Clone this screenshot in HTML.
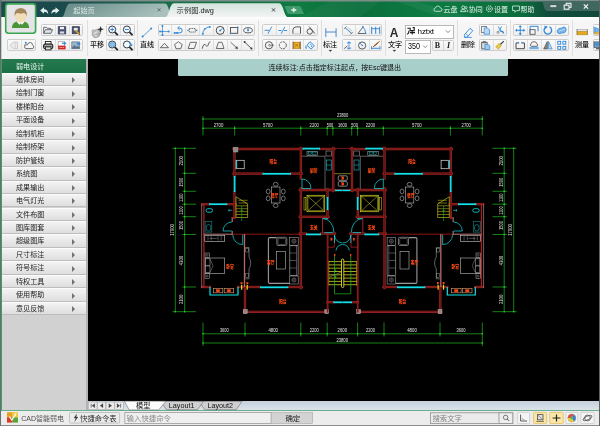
<!DOCTYPE html>
<html lang="zh-CN">
<head>
<meta charset="utf-8">
<title>CAD智能弱电</title>
<style>
html,body{margin:0;padding:0;}
body{width:600px;height:426px;overflow:hidden;background:#000;position:relative;
 font-family:"Liberation Sans","Noto Sans CJK SC",sans-serif;font-size:7.1px;color:#222;font-weight:400;}
.abs{position:absolute;}
.lbl,#left,#banner,.combo,svg{will-change:transform;}
#title{left:0;top:0;width:600px;height:17px;
 background:linear-gradient(90deg,#1b4a4d 0,#1b4a4d 62px,#1c5a4f 120px,#187048 175px,#0f7a42 300px,#0b6e3c 360px,#0d7c44 430px,#0b6c3c 522px,#0f5a3c 538px,#114c3c 548px,#104a3c 600px);}
#ribbon{left:0;top:17.1px;width:600px;height:41.8px;background:linear-gradient(180deg,#fefefe 0,#f6f6f6 12%,#f4f4f4 100%);}
.grp{position:absolute;border:0.7px solid #cdcdcd;border-radius:1.5px;background:linear-gradient(180deg,#fafafa,#eeeeee);box-sizing:border-box;}
.vsep{position:absolute;top:20px;height:36px;width:0.8px;background:#dfdfdf;}
.lbl{position:absolute;font-size:7.1px;font-weight:500;color:#161616;white-space:nowrap;line-height:8px;width:30px;text-align:center;}
.combo{position:absolute;background:#fff;border:0.7px solid #b9b9b9;box-sizing:border-box;font-size:8px;color:#111;white-space:nowrap;}
#left{left:0;top:58.7px;width:87.7px;height:351.3px;background:#d1d1d1;}
#lhead{left:2px;top:0;width:84.3px;height:13.8px;background:linear-gradient(180deg,#24794e,#1b6f45);color:#eaf3ee;font-size:7.1px;line-height:13.5px;}
.mi{position:absolute;left:2px;width:84.3px;height:13.47px;box-sizing:border-box;border-bottom:0.7px solid #bdbdbd;border-top:0.6px solid #fbfbfb;
 background:linear-gradient(180deg,#f3f3f3,#dedede);font-size:7.1px;line-height:12.5px;color:#1d1d1d;}
.mi span{position:absolute;left:14px;top:0;}
.mi i{position:absolute;left:70.3px;top:3.4px;width:0;height:0;border-left:3.6px solid #707070;border-top:3px solid transparent;border-bottom:3px solid transparent;}
#banner{left:177.8px;top:58.6px;width:330px;height:17px;background:#a9cfcb;border-radius:0 0 1.5px 1.5px;font-size:7.05px;line-height:17.4px;color:#0c0c0c;white-space:nowrap;}
#tabs{left:87.7px;top:400.8px;width:512.3px;height:9.4px;background:linear-gradient(180deg,#c5d0dd,#dbe3e9);}
#status{left:0;top:410px;width:600px;height:16px;background:#ececec;border-bottom:1px solid #8c8c8c;box-sizing:border-box;}
.sb{position:absolute;box-sizing:border-box;border:0.7px solid #b4b4b4;font-size:7.6px;white-space:nowrap;}
</style>
</head>
<body>
<div id="title" class="abs"></div>
<div id="ribbon" class="abs"></div>
<div class="grp" style="left:6.7px;top:39.3px;width:29.6px;height:12.1px"></div>
<div class="abs" style="left:21.2px;top:40.3px;width:0.7px;height:10.1px;background:#dedede"></div>
<div class="grp" style="left:41px;top:24.4px;width:42.0px;height:11.9px"></div>
<div class="abs" style="left:54.7px;top:25.4px;width:0.7px;height:9.9px;background:#dedede"></div>
<div class="abs" style="left:68.7px;top:25.4px;width:0.7px;height:9.9px;background:#dedede"></div>
<div class="grp" style="left:41px;top:39.3px;width:42.0px;height:12.1px"></div>
<div class="abs" style="left:54.7px;top:40.3px;width:0.7px;height:10.1px;background:#dedede"></div>
<div class="abs" style="left:68.7px;top:40.3px;width:0.7px;height:10.1px;background:#dedede"></div>
<div class="grp" style="left:106px;top:24.4px;width:29.3px;height:11.9px"></div>
<div class="abs" style="left:120.4px;top:25.4px;width:0.7px;height:9.9px;background:#dedede"></div>
<div class="grp" style="left:106px;top:39.3px;width:29.3px;height:12.1px"></div>
<div class="abs" style="left:120.4px;top:40.3px;width:0.7px;height:10.1px;background:#dedede"></div>
<div class="grp" style="left:157.5px;top:24.4px;width:97.5px;height:11.9px"></div>
<div class="abs" style="left:171.1px;top:25.4px;width:0.7px;height:9.9px;background:#dedede"></div>
<div class="abs" style="left:185.1px;top:25.4px;width:0.7px;height:9.9px;background:#dedede"></div>
<div class="abs" style="left:199.0px;top:25.4px;width:0.7px;height:9.9px;background:#dedede"></div>
<div class="abs" style="left:212.9px;top:25.4px;width:0.7px;height:9.9px;background:#dedede"></div>
<div class="abs" style="left:226.8px;top:25.4px;width:0.7px;height:9.9px;background:#dedede"></div>
<div class="abs" style="left:240.8px;top:25.4px;width:0.7px;height:9.9px;background:#dedede"></div>
<div class="grp" style="left:157.5px;top:39.3px;width:97.5px;height:12.1px"></div>
<div class="abs" style="left:171.1px;top:40.3px;width:0.7px;height:10.1px;background:#dedede"></div>
<div class="abs" style="left:185.1px;top:40.3px;width:0.7px;height:10.1px;background:#dedede"></div>
<div class="abs" style="left:199.0px;top:40.3px;width:0.7px;height:10.1px;background:#dedede"></div>
<div class="abs" style="left:212.9px;top:40.3px;width:0.7px;height:10.1px;background:#dedede"></div>
<div class="abs" style="left:226.8px;top:40.3px;width:0.7px;height:10.1px;background:#dedede"></div>
<div class="abs" style="left:240.8px;top:40.3px;width:0.7px;height:10.1px;background:#dedede"></div>
<div class="grp" style="left:262px;top:24.4px;width:55.5px;height:11.9px"></div>
<div class="abs" style="left:275.6px;top:25.4px;width:0.7px;height:9.9px;background:#dedede"></div>
<div class="abs" style="left:289.4px;top:25.4px;width:0.7px;height:9.9px;background:#dedede"></div>
<div class="abs" style="left:303.3px;top:25.4px;width:0.7px;height:9.9px;background:#dedede"></div>
<div class="grp" style="left:262px;top:39.3px;width:55.5px;height:12.1px"></div>
<div class="abs" style="left:275.6px;top:40.3px;width:0.7px;height:10.1px;background:#dedede"></div>
<div class="abs" style="left:289.4px;top:40.3px;width:0.7px;height:10.1px;background:#dedede"></div>
<div class="abs" style="left:303.3px;top:40.3px;width:0.7px;height:10.1px;background:#dedede"></div>
<div class="grp" style="left:341.7px;top:24.4px;width:40.8px;height:11.9px"></div>
<div class="abs" style="left:355.0px;top:25.4px;width:0.7px;height:9.9px;background:#dedede"></div>
<div class="abs" style="left:368.6px;top:25.4px;width:0.7px;height:9.9px;background:#dedede"></div>
<div class="grp" style="left:341.7px;top:39.3px;width:40.8px;height:12.1px"></div>
<div class="abs" style="left:355.0px;top:40.3px;width:0.7px;height:10.1px;background:#dedede"></div>
<div class="abs" style="left:368.6px;top:40.3px;width:0.7px;height:10.1px;background:#dedede"></div>
<div class="grp" style="left:478.6px;top:24.4px;width:28.4px;height:11.9px"></div>
<div class="abs" style="left:492.5px;top:25.4px;width:0.7px;height:9.9px;background:#dedede"></div>
<div class="grp" style="left:478.6px;top:39.3px;width:28.4px;height:12.1px"></div>
<div class="abs" style="left:492.5px;top:40.3px;width:0.7px;height:10.1px;background:#dedede"></div>
<div class="grp" style="left:513.3px;top:24.4px;width:55.4px;height:11.9px"></div>
<div class="abs" style="left:526.9px;top:25.4px;width:0.7px;height:9.9px;background:#dedede"></div>
<div class="abs" style="left:540.7px;top:25.4px;width:0.7px;height:9.9px;background:#dedede"></div>
<div class="abs" style="left:554.6px;top:25.4px;width:0.7px;height:9.9px;background:#dedede"></div>
<div class="grp" style="left:513.3px;top:39.3px;width:55.4px;height:12.1px"></div>
<div class="abs" style="left:526.9px;top:40.3px;width:0.7px;height:10.1px;background:#dedede"></div>
<div class="abs" style="left:540.7px;top:40.3px;width:0.7px;height:10.1px;background:#dedede"></div>
<div class="abs" style="left:554.6px;top:40.3px;width:0.7px;height:10.1px;background:#dedede"></div>
<div class="grp" style="left:593px;top:24.4px;width:27.6px;height:11.9px"></div>
<div class="abs" style="left:606.5px;top:25.4px;width:0.7px;height:9.9px;background:#dedede"></div>
<div class="grp" style="left:593px;top:39.3px;width:27.6px;height:12.1px"></div>
<div class="abs" style="left:606.5px;top:40.3px;width:0.7px;height:10.1px;background:#dedede"></div>
<div class="vsep" style="left:86.6px"></div>
<div class="vsep" style="left:137.3px"></div>
<div class="vsep" style="left:258.4px"></div>
<div class="vsep" style="left:321px"></div>
<div class="vsep" style="left:385.4px"></div>
<div class="vsep" style="left:457.4px"></div>
<div class="vsep" style="left:510.2px"></div>
<div class="vsep" style="left:572.4px"></div>
<div class="lbl" style="left:81.8px;top:40.6px">平移</div>
<div class="lbl" style="left:131.8px;top:40.6px">直线</div>
<div class="lbl" style="left:315.3px;top:40.6px">标注</div>
<div class="lbl" style="left:379.6px;top:40.6px">文字</div>
<div class="lbl" style="left:453px;top:40.6px">删除</div>
<div class="lbl" style="left:567px;top:40.6px">测量</div>
<div class="combo" style="left:405px;top:24.7px;width:48.8px;height:13.8px;line-height:12.6px"><span style="position:absolute;left:11.6px;top:0.2px;font-size:8.1px;font-weight:400;letter-spacing:-0.15px;color:#000">hztxt</span></div>
<div class="combo" style="left:405px;top:39.5px;width:26px;height:13.9px;line-height:13px"><span style="position:absolute;left:2.4px;top:-0.6px;font-size:9px;font-weight:400;transform:scaleX(0.8);transform-origin:left center;color:#000">350</span></div>
<div class="grp" style="left:432px;top:39.6px;width:22px;height:11.4px"></div>
<div class="abs" style="left:442.6px;top:40.6px;width:0.7px;height:9.4px;background:#d4d4d4"></div>
<div class="abs" style="left:432px;top:39.6px;width:11px;height:11.4px;line-height:11.4px;text-align:center;font-family:'Liberation Serif',serif;font-weight:700;font-size:8px;color:#222">B</div>
<div class="abs" style="left:443px;top:39.6px;width:11px;height:11.4px;line-height:11.4px;text-align:center;font-family:'Liberation Serif',serif;font-weight:700;font-style:italic;font-size:8px;color:#222">I</div>
<svg class="abs" style="left:0;top:0" width="600" height="60" viewBox="0 0 600 60"><rect x="0" y="0" width="600" height="1.5" fill="#7c8c88"/>
<rect x="0" y="0" width="1.3" height="59" fill="#64706e"/>
<path d="M395,1 L440,17 L470,17 L415,1 Z" fill="#ffffff" opacity="0.05"/>
<path d="M330,1 L300,17 L360,17 L380,1 Z" fill="#ffffff" opacity="0.04"/>
<path d="M542.5,1.4 L600,1.4 L600,10.9 L548,10.9 Q545,10.9 544.4,8.6 Z" fill="#41685f"/>
<rect x="550" y="4.9" width="6.6" height="2.3" fill="#eef2f0" stroke="#2a4a42" stroke-width="0.5" rx="0.6"/>
<rect x="566.2" y="3.3" width="4.8" height="4" fill="none" stroke="#eef2f0" stroke-width="1.1"/>
<rect x="564.2" y="5.2" width="4.8" height="4" fill="#41685f" stroke="#eef2f0" stroke-width="1.1"/>
<path d="M583.8,4.4 L588,8.6 M588,4.4 L583.8,8.6" stroke="#f4f7f6" stroke-width="1.25"/>
<defs><linearGradient id="t1" x1="0" y1="0" x2="1" y2="0.25"><stop offset="0" stop-color="#668a87"/><stop offset="0.5" stop-color="#86a5a1"/><stop offset="1" stop-color="#a9c0bc"/></linearGradient><linearGradient id="t2" x1="0" y1="0" x2="0" y2="1"><stop offset="0" stop-color="#d4e3dd"/><stop offset="1" stop-color="#f2f4f3"/></linearGradient></defs>
<path d="M62,17 C65,17 65.5,3.5 70,3.5 L165,3.5 C169,3.5 169.5,17 173,17 Z" fill="url(#t1)"/>
<path d="M165.5,17 C169,17 169.5,3.2 174,3.2 L279,3.2 C283.5,3.2 284,17 288,17 Z" fill="url(#t2)"/>
<path d="M284.5,6 L299,6 Q300.5,6 301.2,7.5 L304,14 L289.5,14 Q288,14 287.3,12.5 Z" fill="#3f9a6c"/>
<path d="M291.3,10 L296.3,10 M293.8,7.7 L293.8,12.3" stroke="#e8f4ee" stroke-width="1.3"/>
<text x="73.3" y="13" font-size="7.1" font-weight="350" fill="#e2ebe9" font-family="Liberation Sans,Noto Sans CJK SC,sans-serif">起始页</text>
<text x="176.6" y="13.2" font-size="7.3" font-weight="350" fill="#202020" font-family="Liberation Sans,Noto Sans CJK SC,sans-serif">示例图.dwg</text>
<path d="M157.6,8.2 L160.6,11.4 M160.6,8.2 L157.6,11.4" stroke="#4f6663" stroke-width="0.8"/>
<path d="M272,8.3 L275,11.5 M275,8.3 L272,11.5" stroke="#3c3c3c" stroke-width="0.9"/>
<path d="M40.2,10.5 L44,7.3 L44,9.3 Q48.2,9.3 48.2,14 Q47,11.8 44,11.8 L44,13.7 Z" fill="#e4eeee"/>
<path d="M59.3,10.5 L55.5,7.3 L55.5,9.3 Q51.3,9.3 51.3,14 Q52.5,11.8 55.5,11.8 L55.5,13.7 Z" fill="#e4eeee"/>
<rect x="5.7" y="3.9" width="29.9" height="29.3" rx="2.6" fill="#e4e4e7" stroke="#3ba453" stroke-width="1.6"/>
<path d="M11.8,27.9 Q12.4,22.4 17,21.6 L24.4,21.6 Q28.6,22.4 29.2,27.9 Z" fill="#4b9539"/>
<path d="M16.6,21.8 L19.4,24.8 L20.7,23.4 L22,24.8 L24.8,21.8 L22.8,20.4 L18.6,20.4 Z" fill="#f6f6f2"/>
<ellipse cx="20.7" cy="16.4" rx="5.7" ry="6" fill="#f0dcb6"/>
<path d="M14.6,16.6 Q13.6,8.4 20.7,8 Q27.8,8.4 26.8,16.6 Q25.8,12.6 23.2,12.9 Q20.7,14 18.2,12.9 Q15.6,12.6 14.6,16.6 Z" fill="#a3865c"/>
<text x="443.6" y="12" font-family="Liberation Sans,Noto Sans CJK SC,sans-serif" font-size="7" font-weight="400" fill="#e6f3ec">云盘</text><text x="468.8" y="12" font-family="Liberation Sans,Noto Sans CJK SC,sans-serif" font-size="7" font-weight="400" fill="#e6f3ec">协同</text><text x="494" y="12" font-family="Liberation Sans,Noto Sans CJK SC,sans-serif" font-size="7" font-weight="400" fill="#e6f3ec">设置</text><text x="520.6" y="12" font-family="Liberation Sans,Noto Sans CJK SC,sans-serif" font-size="7" font-weight="400" fill="#e6f3ec">帮助</text>
<path d="M435.6,11.3 Q433.8,11.3 433.8,9.6 Q433.9,8.2 435.4,8.1 Q435.9,6 438,6 Q440,6.1 440.4,8 Q442,8.2 442,9.7 Q442,11.3 440.3,11.3 Z" fill="none" stroke="#dff0e6" stroke-width="0.8"/>
<circle cx="463.2" cy="7.4" r="1.5" fill="none" stroke="#dff0e6" stroke-width="0.8"/><path d="M460.6,11.6 Q460.6,9.4 463.2,9.4 Q465.8,9.4 465.8,11.6 Z" fill="none" stroke="#dff0e6" stroke-width="0.8"/><circle cx="466" cy="7.6" r="1.1" fill="none" stroke="#dff0e6" stroke-width="0.7"/><path d="M466.6,9.6 Q468,9.8 468,11.6 L466.6,11.6" fill="none" stroke="#dff0e6" stroke-width="0.7"/>
<circle cx="489.4" cy="8.8" r="2.9" fill="none" stroke="#dff0e6" stroke-width="1" stroke-dasharray="1.6 0.7"/><circle cx="489.4" cy="8.8" r="1.1" fill="none" stroke="#dff0e6" stroke-width="0.7"/>
<path d="M512.6,6 L519.4,6 L519.4,10.6 L516.6,10.6 L515,12.3 L515,10.6 L512.6,10.6 Z" fill="none" stroke="#dff0e6" stroke-width="0.8"/></svg>
<svg class="abs" style="left:0;top:0" width="600" height="60" viewBox="0 0 600 60"><g transform="translate(14 45.3)"><path d="M-4,0 L-0.5,-3.2 L3.6,-3.2 L3.6,3.2 L-0.5,3.2 Z" stroke="#c2c2c2" stroke-width="0.8" fill="#ececec" /><path d="M1.2,-3 L1.2,3" stroke="#c8c8c8" stroke-width="0.6" fill="none" /></g>
<g transform="translate(29 45.3)"><path d="M-3.2,3.3 Q-4.4,3.3 -4.3,1.2 L-4.3,-0.4 L-1.6,-0.4 Q-1,-3 1.4,-2.8 Q3.4,-2.6 3.6,-0.2 Q4.8,0.2 4.7,1.8 Q4.6,3.3 3.2,3.3 Z" stroke="#4a4a4a" stroke-width="0.8" fill="#f8f8f8" /><circle cx="-3.2" cy="-2.6" r="1.0" fill="#2f86d6"/></g>
<g transform="translate(48 30.3)"><path d="M-4.3,3 L-4.3,-3 L-1.6,-3 L-0.8,-2 L2.6,-2 L2.6,-0.6" stroke="#4a4a4a" stroke-width="0.8" fill="none" /><path d="M-4.3,3 L-2.6,-0.6 L4.6,-0.6 L2.9,3 Z" stroke="#4a4a4a" stroke-width="0.8" fill="#dfe6ee" /></g>
<g transform="translate(62 30.3)"><rect x="-3.8" y="-3.6" width="7.6" height="7.2" stroke="#2c3550" stroke-width="0.7" fill="#4a5475" /><rect x="-2.2" y="-3.6" width="4.4" height="2.8" stroke="#2c3550" stroke-width="0.4" fill="#f2f2f2" /><rect x="-2.4" y="0.8" width="4.8" height="2.8" stroke="#2c3550" stroke-width="0.4" fill="#d8dbe6" /></g>
<g transform="translate(76 30.3)"><rect x="-3.8" y="-3.6" width="7.2" height="7" stroke="#2c3550" stroke-width="0.7" fill="#4a5475" /><rect x="-2.4" y="-2.6" width="4.4" height="3.2" stroke="#2c3550" stroke-width="0.4" fill="#ececec" /><path d="M-0.6,0.2 L3.2,3.8" stroke="#d8a020" stroke-width="1.6" fill="none" /><path d="M3,3.6 L4,4.6" stroke="#333" stroke-width="1.0" fill="none" /></g>
<g transform="translate(48.2 45.699999999999996)"><rect x="-2.8" y="-4.2" width="5.6" height="2.8" stroke="#222" stroke-width="0.9" fill="#fff" /><rect x="-4.6" y="-1.6" width="9.2" height="4.4" stroke="#1c1c1c" stroke-width="1.1" fill="#f4f4f4" rx="1.6"/><rect x="-2.8" y="1.2" width="5.6" height="3" stroke="#222" stroke-width="0.9" fill="#ddd" /><path d="M-4.2,0.4 L4.2,0.4" stroke="#222" stroke-width="0.9" fill="none" /></g>
<g transform="translate(62 45.3)"><rect x="-3.8" y="-3.8" width="6.4" height="5" stroke="#999" stroke-width="0.6" fill="#fff" /><rect x="-3.9" y="0.6" width="7.2" height="3.2" stroke="#c81e1e" stroke-width="0.4" fill="#d42a2a" /><path d="M-2.4,2.2 L1.8,2.2" stroke="#fff" stroke-width="0.7" fill="none" stroke-dasharray="1 0.6"/><path d="M0,-2 L2.6,-2" stroke="#2f86d6" stroke-width="1.3" fill="none" /><path d="M2.2,-3.6 L4.4,-2 L2.2,-0.4 Z" stroke="#2f86d6" stroke-width="0.2" fill="#2f86d6" /></g>
<g transform="translate(76 45.3)"><rect x="-4.2" y="-3.4" width="7.6" height="6.8" stroke="#667" stroke-width="0.7" fill="#9fb6cc" /><path d="M-4,2.4 L-1.6,0 L0.4,1.8 L1.8,0.6 L3.2,2 L3.2,3.2 L-4,3.2 Z" stroke="#56708a" stroke-width="0.3" fill="#56708a" /><path d="M0.6,-1.6 L2.8,-1.6" stroke="#2f86d6" stroke-width="1.3" fill="none" /><path d="M2.4,-3.2 L4.6,-1.6 L2.4,0 Z" stroke="#2f86d6" stroke-width="0.2" fill="#2f86d6" /></g>
<defs><radialGradient id="hg" cx="0.4" cy="0.35" r="0.7"><stop offset="0" stop-color="#e6e6e6"/><stop offset="1" stop-color="#9c9c9c"/></radialGradient></defs>
<g transform="translate(96.4 33.2)"><ellipse cx="0" cy="0" rx="4.6" ry="3.3" transform="rotate(-28)" fill="url(#hg)" stroke="#8c8c8c" stroke-width="0.5"/><ellipse cx="-0.6" cy="2.6" rx="3.2" ry="1.6" transform="rotate(-12)" fill="url(#hg)" stroke="#8c8c8c" stroke-width="0.4"/><ellipse cx="-2.8" cy="-2.2" rx="1.8" ry="1.3" fill="#c4c4c4" stroke="#8c8c8c" stroke-width="0.4"/></g>
<path d="M100.6,26.4 L101.3,28.5 L103.4,29.2 L101.3,29.9 L100.6,32 L99.9,29.9 L97.8,29.2 L99.9,28.5 Z" stroke="#222" stroke-width="0.3" fill="#2a2a2a" />
<g transform="translate(113.2 30.3)"><circle cx="-1" cy="-0.8" r="3.5" stroke="#2c3c48" stroke-width="1.0" fill="#f4f9ff"/><path d="M1.6,1.8 L4.6,4.8" stroke="#222" stroke-width="1.7" fill="none" /><path d="M-2.9,-0.8 L0.9,-0.8 M-1,-2.7 L-1,1.1" stroke="#2f86d6" stroke-width="1.0" fill="none" /></g>
<g transform="translate(127.9 30.3)"><circle cx="-1" cy="-0.8" r="3.5" stroke="#2c3c48" stroke-width="1.0" fill="#f4f9ff"/><path d="M1.6,1.8 L4.6,4.8" stroke="#222" stroke-width="1.7" fill="none" /><path d="M-2.9,-0.8 L0.9,-0.8" stroke="#2f86d6" stroke-width="1.0" fill="none" /></g>
<g transform="translate(113.2 45.3)"><circle cx="-1" cy="-0.8" r="3.5" stroke="#2c3c48" stroke-width="1.0" fill="#f4f9ff"/><path d="M1.6,1.8 L4.6,4.8" stroke="#222" stroke-width="1.7" fill="none" /><circle cx="-1" cy="-0.8" r="2.3" stroke="#2f86d6" stroke-width="0.5" fill="#86c0f0"/></g>
<g transform="translate(127.9 45.3)"><circle cx="-1" cy="-0.8" r="3.5" stroke="#2c3c48" stroke-width="1.0" fill="#f4f9ff"/><path d="M1.6,1.8 L4.6,4.8" stroke="#222" stroke-width="1.7" fill="none" /><path d="M0.3,-3.6 Q3.6,-3.2 3.4,0.2" stroke="#2f86d6" stroke-width="1.0" fill="none" /><path d="M2.4,-0.6 L3.5,0.9 L4.4,-0.8" stroke="#2f86d6" stroke-width="0.6" fill="#2f86d6" /></g>
<path d="M142.6,36.6 L151.2,28.6" stroke="#2f86d6" stroke-width="0.8" fill="none" /><circle cx="142.6" cy="36.6" r="1.0" fill="#2f86d6"/><circle cx="151.2" cy="28.6" r="1.0" fill="#2f86d6"/>
<g transform="translate(164.465 30.3)"><path d="M-4.4,1.2 L4.2,1.2 M-2,-4.6 L-2,4.8" stroke="#2f86d6" stroke-width="0.7" fill="none" /><circle cx="-4.4" cy="1.2" r="1.0" fill="#2f86d6"/><circle cx="4.2" cy="1.2" r="1.0" fill="#2f86d6"/><circle cx="-2" cy="-4.4" r="1.0" fill="#2f86d6"/><circle cx="-2" cy="4.6" r="1.0" fill="#2f86d6"/><circle cx="-2" cy="1.2" r="1.0" fill="#2f86d6"/></g>
<g transform="translate(178.395 30.3)"><path d="M-3.8,2.6 L1.2,2.6 Q3.8,2.6 3.8,0.2 Q3.8,-2.2 1.2,-2.2 L0,-2.2" stroke="#2f86d6" stroke-width="1.0" fill="none" /><path d="M1.2,-3.8 L-0.8,-2.2 L1.2,-0.6" stroke="#2f86d6" stroke-width="0.9" fill="none" /><circle cx="-3.8" cy="2.6" r="1.0" fill="#2f86d6"/><circle cx="-1.2" cy="2.6" r="1.0" fill="#2f86d6"/></g>
<g transform="translate(192.325 30.3)"><rect x="-3" y="-1.8" width="6" height="3.6" stroke="#4a4a4a" stroke-width="0.8" fill="none" stroke-dasharray="1.4 0.8"/><path d="M-5,0 L-3.6,0 M3.6,0 L5,0" stroke="#2f86d6" stroke-width="1.2" fill="none" /></g>
<g transform="translate(206.255 30.3)"><path d="M-3.6,4 Q-3,-2.8 4,-3.6" stroke="#2f86d6" stroke-width="0.9" fill="none" /><circle cx="-3.4" cy="3.6" r="0.9" fill="#2f86d6"/><circle cx="3.6" cy="-3.4" r="0.9" fill="#2f86d6"/><circle cx="-1.6" cy="-1.2" r="0.9" fill="#2f86d6"/></g>
<g transform="translate(220.185 30.3)"><circle cx="0" cy="0.1" r="4" stroke="#4a4a4a" stroke-width="1.0" fill="none"/><path d="M0,0.3 L2.4,-2.1" stroke="#2f86d6" stroke-width="0.9" fill="none" /><circle cx="0" cy="0.3" r="1.0" fill="#2f86d6"/></g>
<g transform="translate(234.115 30.3)"><rect x="-3.6" y="-2.8" width="7.2" height="5.8" stroke="#4a4a4a" stroke-width="0.9" fill="none" /><circle cx="-3.6" cy="3" r="0.9" fill="#2f86d6"/><circle cx="3.6" cy="-2.8" r="0.9" fill="#2f86d6"/></g>
<g transform="translate(248.04500000000002 30.3)"><ellipse cx="0" cy="0" rx="4.3" ry="2.6" fill="none" stroke="#4a4a4a" stroke-width="0.9"/><circle cx="0" cy="0" r="1.0" fill="#2f86d6"/><path d="M0,-2.6 L0,0" stroke="#2f86d6" stroke-width="0.7" fill="none" /></g>
<g transform="translate(164.465 45.3)"><path d="M-4,2.4 L0,-2 L4,2.4 Z" stroke="#4a4a4a" stroke-width="0.8" fill="none" /></g>
<g transform="translate(178.395 45.3)"><path d="M0,-3.6 L3.8,-0.8 L2.4,3.4 L-2.4,3.4 L-3.8,-0.8 Z" stroke="#4a4a4a" stroke-width="0.8" fill="none" /></g>
<g transform="translate(192.325 45.3)"><path d="M-2,-3 L4.2,-3 L2,3.2 L-4.2,3.2 Z" stroke="#4a4a4a" stroke-width="0.8" fill="none" /></g>
<g transform="translate(206.255 45.3)"><path d="M-4,3.4 Q-2.6,-3 -0.4,0 Q1.4,2.4 2.2,-1.4 Q2.8,-3.6 4.2,-3.4" stroke="#4a4a4a" stroke-width="0.9" fill="none" /></g>
<g transform="translate(220.185 45.3)"><path d="M-1.8,-3 L1.8,-3 L3.8,3.2 L-3.8,3.2 Z" stroke="#4a4a4a" stroke-width="0.8" fill="none" /></g>
<g transform="translate(234.115 45.3)"><path d="M-3.6,-3.2 L2.6,2.6" stroke="#4a4a4a" stroke-width="0.8" fill="none" /><path d="M3.8,3.8 L1,3 L3,1 Z" stroke="#4a4a4a" stroke-width="0.3" fill="#4a4a4a" /></g>
<g transform="translate(248.04500000000002 45.3)"><path d="M-3.2,-3 L3.2,3" stroke="#4a4a4a" stroke-width="0.9" fill="none" /><circle cx="-3.4" cy="-3.2" r="1.0" fill="#333"/><circle cx="3.4" cy="3.2" r="1.0" fill="#333"/></g>
<g transform="translate(268.9375 30.3)"><path d="M-4.4,0 L0.2,0" stroke="#2f86d6" stroke-width="0.9" fill="none" /><path d="M-1,3.4 L2.8,-3.6" stroke="#2f86d6" stroke-width="0.9" fill="none" /></g>
<g transform="translate(282.8125 30.3)"><path d="M-4.4,0.2 L-1.2,0.2 M1.2,0.2 L4.4,0.2" stroke="#2f86d6" stroke-width="0.9" fill="none" /><path d="M-1.6,3.4 L2,-3.4" stroke="#2f86d6" stroke-width="0.9" fill="none" /></g>
<g transform="translate(296.6875 30.3)"><path d="M-3.8,3.4 L-3.8,-0.4 Q-3.6,-3.2 -0.6,-3.4 L3.8,-3.4 L3.8,3.4" stroke="#4a4a4a" stroke-width="0.9" fill="none" /><path d="M-3.8,3.6 L3.8,3.6" stroke="#aaa" stroke-width="0.6" fill="none" /></g>
<g transform="translate(310.5625 30.3)"><circle cx="-0.8" cy="1.2" r="2.7" stroke="#4a4a4a" stroke-width="0.9" fill="none"/><path d="M-1.4,-3.8 L4.2,3.2" stroke="#4a4a4a" stroke-width="0.9" fill="none" /></g>
<g transform="translate(268.9375 45.3)"><circle cx="0" cy="0" r="3.6" stroke="#4a4a4a" stroke-width="0.9" fill="none"/><circle cx="0.6" cy="0" r="0.9" stroke="#4a4a4a" stroke-width="0.6" fill="none"/><path d="M2,0 L5,0" stroke="#4a4a4a" stroke-width="0.7" fill="none" /></g>
<g transform="translate(282.8125 45.3)"><circle cx="0" cy="0" r="3.5" stroke="#4a4a4a" stroke-width="0.9" fill="none" stroke-dasharray="2.2 1"/></g>
<g transform="translate(296.6875 45.3)"><rect x="-2.8" y="-3" width="5.6" height="6" stroke="#c07c10" stroke-width="0.8" fill="#eab42c" /><path d="M-3.6,-3.8 L-3.6,3.8 M3.6,-3.8 L3.6,3.8" stroke="#7a4c08" stroke-width="0.9" fill="none" /><path d="M-1.6,-1.4 L1.6,1.4 M1.6,-1.4 L-1.6,1.4" stroke="#8a5a08" stroke-width="0.6" fill="none" /></g>
<g transform="translate(310.5625 45.3)"><path d="M-0.6,-3.6 L3.8,0.4 L0.6,3.8 L-3.6,0 Z" stroke="#2f86d6" stroke-width="0.9" fill="#eaf4fe" /><path d="M-0.4,-1.4 L1.6,0.6 L0.4,1.8" stroke="#2f86d6" stroke-width="0.8" fill="none" /><path d="M-4.4,0.4 Q-5.2,2.6 -4,3.2" stroke="#2f86d6" stroke-width="1.1" fill="none" /></g>
<path d="M325.8,28.2 L325.8,37 M336.1,28.2 L336.1,37 M325.8,32 L336.1,32" stroke="#3c80c6" stroke-width="0.9" fill="none" />
<path d="M328.8,50 L332,50 L330.4,51.8 Z" stroke="#444" stroke-width="0.2" fill="#444" />
<g transform="translate(348.5 30.3)"><path d="M-3.4,-2.6 L3,3" stroke="#2f86d6" stroke-width="1.0" fill="none" /><path d="M-4.4,-1.4 L-2.2,-3.8 M2,4 L4.2,1.8" stroke="#4a4a4a" stroke-width="0.7" fill="none" /><path d="M-0.6,-3 L3.4,0.6" stroke="#888" stroke-width="0.5" fill="none" /></g>
<g transform="translate(362.09999999999997 30.3)"><path d="M-4.2,3.2 L4.2,3.2 M-4,3.2 L1,-3.6" stroke="#4a4a4a" stroke-width="0.8" fill="none" /><path d="M0.8,-3.4 Q3.6,-1 3.4,3" stroke="#2f86d6" stroke-width="0.9" fill="none" /><circle cx="0.8" cy="-3.4" r="0.8" fill="#2f86d6"/><circle cx="3.4" cy="3" r="0.8" fill="#2f86d6"/></g>
<g transform="translate(375.7 30.3)"><path d="M-4,-3.6 L-4,3.6 M0,-3.6 L0,3.6 M4,-3.6 L4,3.6" stroke="#2f86d6" stroke-width="1.0" fill="none" /><path d="M-4,-1.6 L4,-1.6" stroke="#2f86d6" stroke-width="0.9" fill="none" /></g>
<g transform="translate(348.5 45.3)"><path d="M-1.6,-2.4 L2.6,-2.4 M-1.6,2.8 L2.6,2.8" stroke="#2f86d6" stroke-width="0.9" fill="none" /><path d="M0.5,-1.8 L0.5,2.2" stroke="#2f86d6" stroke-width="0.8" fill="none" /><path d="M-4.4,3.4 L-1,0.4" stroke="#4a4a4a" stroke-width="0.8" fill="none" /><path d="M0.5,-4 L-0.5,-2.6 L1.5,-2.6 Z M0.5,4.2 L-0.5,3 L1.5,3 Z" stroke="#2f86d6" stroke-width="0.2" fill="#2f86d6" /></g>
<g transform="translate(362.09999999999997 45.3)"><circle cx="0" cy="0.2" r="3.6" stroke="#4a4a4a" stroke-width="0.9" fill="none"/><path d="M0.3,0.2 L-2.4,-2.4" stroke="#2f86d6" stroke-width="0.9" fill="none" /><circle cx="0.3" cy="0.2" r="0.7" fill="#2f86d6"/></g>
<g transform="translate(375.7 45.3)"><path d="M-4.2,1 L-4.2,4 M4.2,1 L4.2,4 M-4.2,3 L4.2,3" stroke="#2f86d6" stroke-width="0.9" fill="none" /><path d="M-2.6,1.6 Q0,0.6 3.6,-3.6 Q0.6,-2.6 -2.6,1.6 Z" stroke="#7a4418" stroke-width="0.5" fill="#9a5a22" /><path d="M2.8,-3 L4.4,-4.4" stroke="#c88a30" stroke-width="1.0" fill="none" /></g>
<text x="394.2" y="36.8" font-size="12" font-weight="700" fill="#2a2a2a" text-anchor="middle" font-family="Liberation Sans,sans-serif">A</text>
<path d="M392.8,50 L396,50 L394.4,51.8 Z" stroke="#444" stroke-width="0.2" fill="#444" />
<path d="M407.4,28.2 L410.2,28.2 L410.2,30.6 L414.2,30.6 L414.2,27.6 L412.6,27.6 M409,30.6 L408.6,33 L407.2,34.4 M412.2,30.6 L412.2,34.4 M410,32.6 L415,32.6" stroke="#1a1a1a" stroke-width="1.1" fill="none" />
<path d="M445.8,30.4 L448,32.6 L450.2,30.4" stroke="#555" stroke-width="0.7" fill="none" />
<path d="M423.2,45.6 L425.2,47.6 L427.2,45.6" stroke="#555" stroke-width="0.7" fill="none" />
<g transform="translate(468.4 33)"><path d="M-4.2,2 L1.6,-4.6 L4.4,-2.4 L-1.2,4.2 L-3.6,4.2 Z" stroke="#2f86d6" stroke-width="0.9" fill="#f4f9ff" /><path d="M-2.8,0.6 L0.2,3" stroke="#2f86d6" stroke-width="0.8" fill="none" /><path d="M-4.2,4.4 L3.4,4.4" stroke="#2f86d6" stroke-width="0.8" fill="none" /></g>
<g transform="translate(485.70000000000005 30.3)"><rect x="-4" y="-3.8" width="4.8" height="6.2" stroke="#4a4a4a" stroke-width="0.7" fill="#fff" /><path d="M-1.6,-2.4 L1.8,-2.4 L3.8,-0.4 L3.8,4 L-1.6,4 Z" stroke="#2f86d6" stroke-width="0.7" fill="#b8d8f4" /></g>
<g transform="translate(499.90000000000003 30.3)"><path d="M-1.6,-3.8 L0.6,0.6 M1.6,-3.8 L-0.2,0.2" stroke="#2f86d6" stroke-width="0.9" fill="none" /><path d="M0.4,1 Q3.4,0.4 3.6,3.2" stroke="#2f86d6" stroke-width="1.4" fill="none" /><circle cx="-1.8" cy="2" r="1.1" stroke="#555" stroke-width="0.6" fill="none"/></g>
<g transform="translate(485.70000000000005 45.3)"><rect x="-4" y="-3" width="5.4" height="6.6" stroke="#4a4a4a" stroke-width="0.8" fill="#ddd" /><rect x="-2.6" y="-4" width="2.6" height="1.6" stroke="#4a4a4a" stroke-width="0.5" fill="#999" /><path d="M-0.8,-1 L2.4,-1 L4,0.6 L4,4.2 L-0.8,4.2 Z" stroke="#2f86d6" stroke-width="0.7" fill="#9ccaf0" /></g>
<g transform="translate(499.90000000000003 45.3)"><path d="M-4.2,1.4 L-0.6,-2 L1.6,0.2 L-1.6,4 Z" stroke="#b88a18" stroke-width="0.5" fill="#e8c84a" /><path d="M0.6,-1 L4,-4.2" stroke="#444" stroke-width="1.3" fill="none" /></g>
<g transform="translate(520.2249999999999 30.3)"><path d="M-4,0 L4,0 M0,-4 L0,4" stroke="#2f86d6" stroke-width="1.0" fill="none" /><path d="M-5,0 L-3.2,-1.4 L-3.2,1.4 Z M5,0 L3.2,-1.4 L3.2,1.4 Z M0,-5 L-1.4,-3.2 L1.4,-3.2 Z M0,5 L-1.4,3.2 L1.4,3.2 Z" stroke="#2f86d6" stroke-width="0.2" fill="#2f86d6" /></g>
<g transform="translate(534.0749999999999 30.3)"><path d="M-4,4 L-4,-4 L4,-4 L4,1" stroke="#2f86d6" stroke-width="1.0" fill="none" /><rect x="-4" y="-0.6" width="5" height="4.6" stroke="#4a4a4a" stroke-width="0.8" fill="#f4f4f4" /></g>
<g transform="translate(547.925 30.3)"><path d="M1.6,-3.4 A3.8,3.8 0 1 1 -2.4,-3" stroke="#2f86d6" stroke-width="1.3" fill="none" /><path d="M-3.4,-4.6 L-0.2,-3.6 L-2.6,-1.4 Z" stroke="#2f86d6" stroke-width="0.2" fill="#2f86d6" /></g>
<g transform="translate(561.775 30.3)"><path d="M-4.6,0.6 Q-3.6,-2.6 0,-2.4 Q1.4,-4 3.4,-3 Q5,-1.4 4.2,0.6 Q3.6,3 0,2.8 Q-1.6,3.8 -3.6,3 Q-5,2 -4.6,0.6 Z" stroke="#2f86d6" stroke-width="0.7" fill="#7ab4e8" /><path d="M-3,1 Q0,-0.6 3.2,-0.8" stroke="#e8f2ff" stroke-width="0.6" fill="none" /></g>
<g transform="translate(520.2249999999999 45.3)"><path d="M-1.6,-2.4 L-4.2,-2.4 L-4.2,3.4 L4.2,3.4 L4.2,-2.4 L1.6,-2.4" stroke="#4a4a4a" stroke-width="1.0" fill="none" /><path d="M-1.6,-3.4 L-1.6,-1.4 M1.6,-3.4 L1.6,-1.4" stroke="#2f86d6" stroke-width="0.8" fill="none" /></g>
<g transform="translate(534.0749999999999 45.3)"><path d="M-2.8,1 Q-4.6,-0.2 -3,-1.6 Q-2.6,-4 0.2,-3.6 Q2.6,-3.6 2.8,-1.4 Q4.6,-0.6 3,1 Z" stroke="#4a4a4a" stroke-width="0.8" fill="none" /><path d="M-4.2,3.4 L4.2,3.4 L4.2,2 L-4.2,2 Z" stroke="#2f86d6" stroke-width="0.6" fill="#9ccaf0" /></g>
<g transform="translate(547.925 45.3)"><path d="M-0.6,-3.8 L-0.6,3.6 L-4.2,3.6 Z" stroke="#4a4a4a" stroke-width="0.7" fill="#888" /><path d="M0.6,-3.8 L0.6,3.6 L4.2,3.6 Z" stroke="#2f86d6" stroke-width="0.7" fill="#bcdcf6" /></g>
<g transform="translate(561.775 45.3)"><rect x="-4" y="-4" width="2.9" height="2.9" stroke="#2f86d6" stroke-width="0.9" fill="none" /><rect x="-4" y="1.1" width="2.9" height="2.9" stroke="#2f86d6" stroke-width="0.9" fill="none" /><rect x="1.1" y="-4" width="2.9" height="2.9" stroke="#2f86d6" stroke-width="0.9" fill="none" /><rect x="1.1" y="1.1" width="2.9" height="2.9" stroke="#2f86d6" stroke-width="0.9" fill="none" /></g>
<rect x="577" y="29.3" width="10.4" height="2.2" stroke="#8a8a8a" stroke-width="0.4" fill="#e2e2e2" /><rect x="577" y="31.5" width="10.4" height="3.4" stroke="#b07c10" stroke-width="0.4" fill="#e8a81e" />
<path d="M577,29 L577,35 M587.4,29 L587.4,35" stroke="#666" stroke-width="0.5" fill="none" />
<g transform="translate(598 30.3)"><path d="M-3.8,-3.4 L-3.8,3 L4,3" stroke="#2f86d6" stroke-width="0.8" fill="none" /><path d="M-3,-3 L3.6,0 L-3,2.2 Z" stroke="#2f86d6" stroke-width="0.5" fill="#7ab8ec" /><rect x="-3.8" y="2.2" width="8" height="1.6" stroke="#c8961e" stroke-width="0.3" fill="#e8b030" /></g>
<g transform="translate(598 45.3)"><rect x="-4" y="-3.4" width="8" height="5.6" stroke="#456" stroke-width="0.7" fill="#6a9ccc" /><path d="M-2,3.4 L2,3.4" stroke="#456" stroke-width="1.2" fill="none" /><path d="M-3,-1 L1,-1" stroke="#2f86d6" stroke-width="1.2" fill="none" /></g></svg>
<div id="left" class="abs">
<div class="abs" style="left:1px;top:0;width:1.2px;height:351.3px;background:#4a9a6a"></div>
<div class="abs" style="left:86.3px;top:0;width:1.4px;height:351.3px;background:#b2b2b2"></div>
<div id="lhead" class="abs"><span style="position:absolute;left:14px;top:1.6px;">弱电设计</span></div>
<div class="mi" style="top:13.80px"><span>墙体房间</span><i></i></div>
<div class="mi" style="top:27.27px"><span>绘制门窗</span><i></i></div>
<div class="mi" style="top:40.74px"><span>楼梯阳台</span><i></i></div>
<div class="mi" style="top:54.21px"><span>平面设备</span><i></i></div>
<div class="mi" style="top:67.68px"><span>绘制机柜</span><i></i></div>
<div class="mi" style="top:81.15px"><span>绘制桥架</span><i></i></div>
<div class="mi" style="top:94.62px"><span>防护管线</span><i></i></div>
<div class="mi" style="top:108.09px"><span>系统图</span><i></i></div>
<div class="mi" style="top:121.56px"><span>成果输出</span><i></i></div>
<div class="mi" style="top:135.03px"><span>电气灯光</span><i></i></div>
<div class="mi" style="top:148.50px"><span>文件布图</span><i></i></div>
<div class="mi" style="top:161.97px"><span>图库图套</span><i></i></div>
<div class="mi" style="top:175.44px"><span>超级图库</span><i></i></div>
<div class="mi" style="top:188.91px"><span>尺寸标注</span><i></i></div>
<div class="mi" style="top:202.38px"><span>符号标注</span><i></i></div>
<div class="mi" style="top:215.85px"><span>特权工具</span><i></i></div>
<div class="mi" style="top:229.32px"><span>使用帮助</span><i></i></div>
<div class="mi" style="top:242.79px"><span>意见反馈</span><i></i></div>
</div>
<div id="banner" class="abs"><span style="position:absolute;left:90.5px;">连续标注:点击指定标注起点<span style="display:inline-block;width:6.2px">，</span>按Esc键退出</span></div>
<svg class="abs" style="left:0;top:0;will-change:transform" width="600" height="426" viewBox="0 0 600 426" font-family="Liberation Sans,sans-serif" stroke-linecap="butt">
<g id="hl"><g stroke="#a32422" stroke-width="2.3" stroke-linecap="square"><path d="M233.5,149 L302.5,149"/><path d="M320,149 L334.3,149"/><path d="M234.5,148 L234.5,176"/><path d="M234.5,192 L234.5,218"/><path d="M233.5,173.6 L262.5,173.6"/><path d="M291,173.6 L301.8,173.6"/><path d="M202.2,204.2 L209,204.2"/><path d="M227.3,204.2 L235.5,204.2"/><path d="M202.5,287 L210,287"/><path d="M238,287 L260,287"/><path d="M288.3,287 L301.8,287"/><path d="M300.8,233.5 L300.8,288"/><path d="M245,287 L245,312.5"/><path d="M244,311.8 L327,311.8"/><path d="M300.8,148 L300.8,178.5"/><path d="M300.8,188.3 L300.8,234"/><path d="M299.8,190 L334.3,190"/><path d="M333.3,148 L333.3,191"/><path d="M327.5,189 L327.5,197"/><path d="M327.5,210 L327.5,218"/><path d="M299.8,216.8 L328.5,216.8"/><path d="M299.8,233.6 L306,233.6"/><path d="M321,233.6 L335,233.6"/><path d="M327.5,302.2 L333.3,302.2"/></g><g stroke="#5c1311" stroke-width="0.9" stroke-linecap="square"><path d="M233.5,149 L302.5,149"/><path d="M320,149 L334.3,149"/><path d="M234.5,148 L234.5,176"/><path d="M234.5,192 L234.5,218"/><path d="M233.5,173.6 L262.5,173.6"/><path d="M291,173.6 L301.8,173.6"/><path d="M202.2,204.2 L209,204.2"/><path d="M227.3,204.2 L235.5,204.2"/><path d="M202.5,287 L210,287"/><path d="M238,287 L260,287"/><path d="M288.3,287 L301.8,287"/><path d="M300.8,233.5 L300.8,288"/><path d="M245,287 L245,312.5"/><path d="M244,311.8 L327,311.8"/><path d="M300.8,148 L300.8,178.5"/><path d="M300.8,188.3 L300.8,234"/><path d="M299.8,190 L334.3,190"/><path d="M333.3,148 L333.3,191"/><path d="M327.5,189 L327.5,197"/><path d="M327.5,210 L327.5,218"/><path d="M299.8,216.8 L328.5,216.8"/><path d="M299.8,233.6 L306,233.6"/><path d="M321,233.6 L335,233.6"/><path d="M327.5,302.2 L333.3,302.2"/></g><line x1="302.5" y1="148.6" x2="320" y2="148.6" stroke="#12dfe6" stroke-width="1.8" />
<line x1="334" y1="148.4" x2="342.65" y2="148.4" stroke="#a32222" stroke-width="0.7" />
<line x1="234.6" y1="176" x2="234.6" y2="192" stroke="#12dfe6" stroke-width="1.8" />
<line x1="262.5" y1="173.8" x2="291" y2="173.8" stroke="#12dfe6" stroke-width="1.8" />
<line x1="209" y1="204.2" x2="227.3" y2="204.2" stroke="#12dfe6" stroke-width="1.8" />
<line x1="201.7" y1="204" x2="201.7" y2="288" stroke="#b98080" stroke-width="0.7" />
<line x1="203.9" y1="204" x2="203.9" y2="288" stroke="#a02222" stroke-width="1.3" />
<line x1="203.5" y1="234.2" x2="232" y2="234.2" stroke="#c98a8a" stroke-width="0.9" />
<line x1="232.2" y1="217" x2="232.2" y2="222" stroke="#c98a8a" stroke-width="1.0" />
<line x1="232.2" y1="231" x2="232.2" y2="235" stroke="#c98a8a" stroke-width="1.0" />
<line x1="232" y1="217.5" x2="235" y2="217.5" stroke="#a32222" stroke-width="1" />
<line x1="232" y1="234.2" x2="301" y2="234.2" stroke="#d01818" stroke-width="0.7" />
<line x1="244.5" y1="234" x2="244.5" y2="287" stroke="#b56a6a" stroke-width="1.3" />
<path d="M210,287 L210,295 L238,295 L238,287" stroke="#12dfe6" stroke-width="1.2" fill="none" />
<rect x="213.3" y="288.6" width="9.50" height="4.20" stroke="#e0a070" stroke-width="0.6" fill="none" />
<rect x="224.2" y="288.6" width="9.50" height="4.20" stroke="#e0a070" stroke-width="0.6" fill="none" />
<rect x="216.3" y="289.6" width="3.30" height="2.30" stroke="#ff4a12" stroke-width="0.4" fill="#ff4a12" />
<rect x="227.3" y="289.6" width="3.30" height="2.30" stroke="#ff4a12" stroke-width="0.4" fill="#ff4a12" />
<line x1="241.7" y1="284.7" x2="241.7" y2="289.7" stroke="#f0f020" stroke-width="1.1" />
<line x1="247.2" y1="284.7" x2="247.2" y2="289.7" stroke="#f0f020" stroke-width="1.1" />
<rect x="240.8" y="282.2" width="1.60" height="1.80" stroke="#ff4a12" stroke-width="0.2" fill="#ff4a12" />
<rect x="246.6" y="282.2" width="1.60" height="1.80" stroke="#ff4a12" stroke-width="0.2" fill="#ff4a12" />
<line x1="260" y1="287.3" x2="288.3" y2="287.3" stroke="#12dfe6" stroke-width="1.8" />
<rect x="243.4" y="309.6" width="3.80" height="4.00" stroke="#c9b4b4" stroke-width="0.5" fill="#8f8585" />
<rect x="324.8" y="309.6" width="3.80" height="4.00" stroke="#c9b4b4" stroke-width="0.5" fill="#8f8585" />
<line x1="327.6" y1="197" x2="327.6" y2="210" stroke="#12dfe6" stroke-width="1.8" />
<line x1="322.5" y1="218" x2="322.5" y2="233" stroke="#a32222" stroke-width="1.0" />
<line x1="306" y1="234.4" x2="321" y2="234.4" stroke="#12dfe6" stroke-width="1.8" />
<line x1="335" y1="190.3" x2="342.65" y2="190.3" stroke="#12dfe6" stroke-width="1.8" />
<line x1="333.5" y1="189.4" x2="342.65" y2="189.4" stroke="#a32222" stroke-width="0.6" />
<line x1="327.6" y1="233" x2="327.6" y2="312.5" stroke="#a32422" stroke-width="1.7" />
<line x1="327.6" y1="233" x2="327.6" y2="312.5" stroke="#5c1311" stroke-width="0.5" />
<line x1="334.3" y1="234" x2="334.3" y2="247.2" stroke="#a32222" stroke-width="0.8" />
<line x1="327.5" y1="247.2" x2="334.3" y2="247.2" stroke="#a32222" stroke-width="0.8" />
<line x1="333.3" y1="302.3" x2="342.65" y2="302.3" stroke="#12dfe6" stroke-width="1.8" />
<rect x="236" y="160.3" width="8.20" height="8.40" stroke="#ddd" stroke-width="0.7" fill="none" />
<line x1="236.6" y1="161" x2="236.6" y2="168" stroke="#12dfe6" stroke-width="1" />
<rect x="271.5" y="187" width="8.50" height="16.00" stroke="#b9b9b9" stroke-width="0.6" fill="none" />
<ellipse cx="275.7" cy="184.3" rx="2.4" ry="1.9" stroke="#b9b9b9" stroke-width="0.6" fill="none"/>
<ellipse cx="275.7" cy="205.6" rx="2.4" ry="1.9" stroke="#b9b9b9" stroke-width="0.6" fill="none"/>
<ellipse cx="268.2" cy="191.5" rx="1.9" ry="2.4" stroke="#b9b9b9" stroke-width="0.6" fill="none"/>
<ellipse cx="268.2" cy="198.4" rx="1.9" ry="2.4" stroke="#b9b9b9" stroke-width="0.6" fill="none"/>
<ellipse cx="283.3" cy="191.5" rx="1.9" ry="2.4" stroke="#b9b9b9" stroke-width="0.6" fill="none"/>
<ellipse cx="283.3" cy="198.4" rx="1.9" ry="2.4" stroke="#b9b9b9" stroke-width="0.6" fill="none"/>
<path d="M302,179 L302,188.5 L311,188.5 M302,179 A9,9.3 0 0 1 311,188.3" stroke="#12dfe6" stroke-width="0.7" fill="none" />
<path d="M302,156.2 L325,156.2 L325,189" stroke="#b9b9b9" stroke-width="0.5" fill="none" />
<rect x="307" y="151.3" width="10.50" height="4.00" stroke="#b9b9b9" stroke-width="0.5" fill="none" />
<rect x="308.5" y="152" width="3.00" height="2.60" stroke="#12dfe6" stroke-width="0.4" fill="none" />
<rect x="312.5" y="152" width="3.50" height="2.60" stroke="#12dfe6" stroke-width="0.4" fill="none" />
<rect x="326" y="151" width="5.50" height="5.00" stroke="#b9b9b9" stroke-width="0.5" fill="none" />
<rect x="326.3" y="160" width="5.00" height="10.00" stroke="#12dfe6" stroke-width="0.5" fill="none" />
<line x1="326.3" y1="165" x2="331.3" y2="165" stroke="#12dfe6" stroke-width="0.5" />
<rect x="307" y="195.3" width="17.70" height="16.40" stroke="#d6d622" stroke-width="0.7" fill="none" />
<rect x="308" y="196.3" width="15.70" height="14.40" stroke="#d6d622" stroke-width="0.4" fill="none" />
<path d="M308,196.3 L323.7,210.7 M323.7,196.3 L308,210.7" stroke="#d6d622" stroke-width="0.5" fill="none" />
<rect x="304" y="197.5" width="1.80" height="12.50" stroke="#d6d622" stroke-width="0.5" fill="none" />
<path d="M322.8,218.5 A11.5,14 0 0 1 334,232.5" stroke="#12dfe6" stroke-width="0.7" fill="none" />
<path d="M324.2,232.6 L332.8,232.6 M323,218.6 L328,218.6" stroke="#12dfe6" stroke-width="0.7" fill="none" />
<path d="M334.5,235 A8,8 0 0 0 342.5,243 M334.5,235 L334.5,243" stroke="#12dfe6" stroke-width="0.7" fill="none" />
<path d="M336,250.5 A7,7 0 0 1 342.5,244.5" stroke="#12dfe6" stroke-width="0.7" fill="none" />
<rect x="330.7" y="238" width="1.50" height="2.50" stroke="#ff4a12" stroke-width="0.2" fill="#ff4a12" />
<rect x="334.2" y="254" width="1.00" height="2.50" stroke="#ff4a12" stroke-width="0.2" fill="#ff4a12" />
<rect x="206.1" y="208.7" width="6.40" height="3.50" stroke="#12dfe6" stroke-width="0.8" fill="none" rx="1.6"/>
<rect x="205.1" y="221.3" width="6.70" height="10.80" stroke="#178888" stroke-width="0.6" fill="none" />
<ellipse cx="208.5" cy="227.8" rx="2.4" ry="3.3" stroke="#1aa6a6" stroke-width="0.6" fill="none"/>
<path d="M228.3,210.3 L232.3,210.3 M229,209 L229,211.6" stroke="#12dfe6" stroke-width="0.6" fill="none" />
<path d="M231.8,231 L223,231 M223,231 A9,9 0 0 1 231.8,222" stroke="#12dfe6" stroke-width="0.7" fill="none" />
<path d="M242.7,234.6 L242.7,244.6 M242.7,244.6 A10,10 0 0 1 232.7,234.6" stroke="#12dfe6" stroke-width="0.7" fill="none" />
<path d="M236,196.8 L247.6,204 L247.6,217.5 L236,217.5 Z" stroke="#d6d622" stroke-width="0.6" fill="none" />
<line x1="238.5" y1="200.3" x2="247.6" y2="200.3" stroke="#d6d622" stroke-width="0.5" />
<line x1="238.5" y1="203" x2="247.6" y2="203" stroke="#d6d622" stroke-width="0.5" />
<line x1="236" y1="205.8" x2="247.6" y2="205.8" stroke="#d6d622" stroke-width="0.5" />
<line x1="236" y1="208.7" x2="247.6" y2="208.7" stroke="#d6d622" stroke-width="0.5" />
<line x1="236" y1="211.6" x2="247.6" y2="211.6" stroke="#d6d622" stroke-width="0.5" />
<line x1="236" y1="214.5" x2="247.6" y2="214.5" stroke="#d6d622" stroke-width="0.5" />
<line x1="241.7" y1="206" x2="241.7" y2="221" stroke="#1db81d" stroke-width="0.6" />
<line x1="240.5" y1="210.5" x2="243" y2="210.5" stroke="#1db81d" stroke-width="0.6" />
<rect x="204.8" y="235.6" width="19.90" height="5.70" stroke="#c8c8c8" stroke-width="0.6" fill="none" />
<line x1="208" y1="236.2" x2="208" y2="240.6" stroke="#bbb" stroke-width="0.4" />
<line x1="211.2" y1="236.2" x2="211.2" y2="240.6" stroke="#bbb" stroke-width="0.4" />
<line x1="218" y1="236.2" x2="218" y2="240.6" stroke="#bbb" stroke-width="0.4" />
<line x1="221.2" y1="236.2" x2="221.2" y2="240.6" stroke="#bbb" stroke-width="0.4" />
<line x1="209.6" y1="238.4" x2="216.8" y2="238.4" stroke="#bbb" stroke-width="0.4" />
<rect x="205" y="258" width="19.70" height="15.30" stroke="#b9b9b9" stroke-width="0.6" fill="none" />
<rect x="205.5" y="258.8" width="4.50" height="6.40" stroke="#b9b9b9" stroke-width="0.5" fill="none" />
<rect x="205.5" y="266" width="4.50" height="6.50" stroke="#b9b9b9" stroke-width="0.5" fill="none" />
<path d="M210,259 L213,265.7 L210,272.5" stroke="#b9b9b9" stroke-width="0.4" fill="none" />
<rect x="205" y="253" width="4.30" height="4.60" stroke="#b9b9b9" stroke-width="0.5" fill="none" />
<rect x="205" y="273.7" width="4.30" height="4.80" stroke="#b9b9b9" stroke-width="0.5" fill="none" />
<ellipse cx="207.1" cy="255.3" rx="1" ry="1" stroke="#b9b9b9" stroke-width="0.4" fill="none"/>
<ellipse cx="207.1" cy="276.1" rx="1" ry="1" stroke="#b9b9b9" stroke-width="0.4" fill="none"/>
<path d="M245.3,247.5 L249,247.5 L249,257 Q252.5,263 249,269 L249,278.8 L245.3,278.8" stroke="#b9b9b9" stroke-width="0.5" fill="none" />
<rect x="245.8" y="248.5" width="2.80" height="3.50" stroke="#b9b9b9" stroke-width="0.4" fill="none" />
<rect x="245.8" y="273.5" width="2.80" height="4.00" stroke="#b9b9b9" stroke-width="0.4" fill="none" />
<path d="M276.6,237.6 L269.6,237.6 Q268.4,237.6 268.4,238.8 L268.4,282.2 Q268.4,283.4 269.6,283.4 L289.6,283.4" stroke="#9a9a9a" stroke-width="1.1" fill="none" />
<rect x="276.8" y="237.3" width="10.00" height="8.20" stroke="#b9b9b9" stroke-width="0.6" fill="none" rx="1.2"/>
<rect x="278" y="238.5" width="7.60" height="6.00" stroke="#b9b9b9" stroke-width="0.4" fill="none" rx="0.8"/>
<rect x="276.3" y="251.4" width="9.00" height="17.60" stroke="#b9b9b9" stroke-width="0.6" fill="none" />
<rect x="289.7" y="245.6" width="8.50" height="29.90" stroke="#b9b9b9" stroke-width="0.6" fill="none" rx="1"/>
<line x1="289.7" y1="253" x2="296.5" y2="253" stroke="#b9b9b9" stroke-width="0.4" />
<line x1="289.7" y1="260.5" x2="296.5" y2="260.5" stroke="#b9b9b9" stroke-width="0.4" />
<line x1="289.7" y1="268" x2="296.5" y2="268" stroke="#b9b9b9" stroke-width="0.4" />
<line x1="296.5" y1="245.6" x2="296.5" y2="275.5" stroke="#b9b9b9" stroke-width="0.4" />
<rect x="289.7" y="237.3" width="8.50" height="7.90" stroke="#b9b9b9" stroke-width="0.5" fill="none" />
<rect x="289.7" y="276" width="8.50" height="8.00" stroke="#b9b9b9" stroke-width="0.5" fill="none" />
<ellipse cx="294" cy="241.2" rx="2.1" ry="2.1" stroke="#b9b9b9" stroke-width="0.4" fill="none"/>
<path d="M291.9,241.2 L296.1,241.2 M294,239.1 L294,243.29999999999998" stroke="#b9b9b9" stroke-width="0.3" fill="none" />
<ellipse cx="294" cy="280" rx="2.1" ry="2.1" stroke="#b9b9b9" stroke-width="0.4" fill="none"/>
<path d="M291.9,280 L296.1,280 M294,277.9 L294,282.1" stroke="#b9b9b9" stroke-width="0.3" fill="none" />
<line x1="328.8" y1="261.6" x2="342.65" y2="261.6" stroke="#cfcf26" stroke-width="0.8" />
<line x1="328.8" y1="264.90000000000003" x2="342.65" y2="264.90000000000003" stroke="#cfcf26" stroke-width="0.8" />
<line x1="328.8" y1="268.20000000000005" x2="342.65" y2="268.20000000000005" stroke="#cfcf26" stroke-width="0.8" />
<line x1="328.8" y1="271.5" x2="342.65" y2="271.5" stroke="#cfcf26" stroke-width="0.8" />
<line x1="328.8" y1="274.8" x2="342.65" y2="274.8" stroke="#cfcf26" stroke-width="0.8" />
<line x1="328.8" y1="278.1" x2="342.65" y2="278.1" stroke="#cfcf26" stroke-width="0.8" />
<line x1="328.8" y1="281.40000000000003" x2="342.65" y2="281.40000000000003" stroke="#cfcf26" stroke-width="0.8" />
<line x1="328.8" y1="284.70000000000005" x2="342.65" y2="284.70000000000005" stroke="#cfcf26" stroke-width="0.8" />
<path d="M334.5,256.5 L334.5,293.8 L342.65,293.8" stroke="#1db81d" stroke-width="0.7" fill="none" />
<line x1="328.8" y1="261" x2="328.8" y2="285.5" stroke="#d6d622" stroke-width="0.5" /></g>
<use href="#hl" transform="translate(685.3 0) scale(-1 1)"/>
<rect x="233.4" y="147.4" width="4.5" height="4.6" fill="#8a8a8a" stroke="#a8a8a8" stroke-width="0.5"/>
<line x1="334.3" y1="173.7" x2="351" y2="173.7" stroke="#c8c83a" stroke-width="0.6" />
<rect x="338.2" y="175.8" width="9.10" height="4.60" stroke="#cfcfcf" stroke-width="0.6" fill="none" rx="1.2"/>
<rect x="338.2" y="181.6" width="9.10" height="4.60" stroke="#cfcfcf" stroke-width="0.6" fill="none" rx="1.2"/>
<rect x="341.8" y="176.8" width="2.00" height="2.60" stroke="#ff4a12" stroke-width="0.3" fill="#ff4a12" />
<rect x="341.8" y="182.6" width="2.00" height="2.60" stroke="#ff4a12" stroke-width="0.3" fill="#ff4a12" />
<rect x="341.5" y="259" width="2.30" height="28.60" stroke="#f2f21c" stroke-width="0.8" fill="#000" rx="1.1"/>
<path d="M329.5,277 L341.5,272" stroke="#8a8a50" stroke-width="0.7" fill="none" />
<path d="M334.8,269.5 l1.4,1.2 l-1.4,1.2 M334.8,275.5 l1.4,1.2 l-1.4,1.2" stroke="#40ff40" stroke-width="0.7" fill="none" />
<line x1="203" y1="119" x2="482.3" y2="119" stroke="#1db81d" stroke-width="0.7" />
<line x1="203" y1="128.2" x2="482.3" y2="128.2" stroke="#1db81d" stroke-width="0.7" />
<line x1="203" y1="116" x2="203" y2="135.5" stroke="#1db81d" stroke-width="0.7" />
<line x1="482.3" y1="116" x2="482.3" y2="135.5" stroke="#1db81d" stroke-width="0.7" />
<line x1="234.7" y1="126" x2="234.7" y2="135.5" stroke="#1db81d" stroke-width="0.7" />
<line x1="300.8" y1="126" x2="300.8" y2="135.5" stroke="#1db81d" stroke-width="0.7" />
<line x1="327.2" y1="126" x2="327.2" y2="135.5" stroke="#1db81d" stroke-width="0.7" />
<line x1="332.9" y1="126" x2="332.9" y2="135.5" stroke="#1db81d" stroke-width="0.7" />
<line x1="351.7" y1="126" x2="351.7" y2="135.5" stroke="#1db81d" stroke-width="0.7" />
<line x1="357.6" y1="126" x2="357.6" y2="135.5" stroke="#1db81d" stroke-width="0.7" />
<line x1="383.3" y1="126" x2="383.3" y2="135.5" stroke="#1db81d" stroke-width="0.7" />
<line x1="450.4" y1="126" x2="450.4" y2="135.5" stroke="#1db81d" stroke-width="0.7" />
<line x1="203" y1="333.8" x2="482.3" y2="333.8" stroke="#1db81d" stroke-width="0.7" />
<line x1="203" y1="343" x2="482.3" y2="343" stroke="#1db81d" stroke-width="0.7" />
<line x1="203" y1="322.5" x2="203" y2="346" stroke="#1db81d" stroke-width="0.7" />
<line x1="482.3" y1="322.5" x2="482.3" y2="346" stroke="#1db81d" stroke-width="0.7" />
<line x1="245" y1="322.5" x2="245" y2="336.5" stroke="#1db81d" stroke-width="0.7" />
<line x1="300.8" y1="322.5" x2="300.8" y2="336.5" stroke="#1db81d" stroke-width="0.7" />
<line x1="327.2" y1="322.5" x2="327.2" y2="336.5" stroke="#1db81d" stroke-width="0.7" />
<line x1="357.6" y1="322.5" x2="357.6" y2="336.5" stroke="#1db81d" stroke-width="0.7" />
<line x1="384" y1="322.5" x2="384" y2="336.5" stroke="#1db81d" stroke-width="0.7" />
<line x1="440" y1="322.5" x2="440" y2="336.5" stroke="#1db81d" stroke-width="0.7" />
<line x1="175.3" y1="148.3" x2="175.3" y2="311.7" stroke="#1db81d" stroke-width="0.7" />
<line x1="184.7" y1="148.3" x2="184.7" y2="311.7" stroke="#1db81d" stroke-width="0.7" />
<line x1="172.5" y1="148.3" x2="196" y2="148.3" stroke="#1db81d" stroke-width="0.7" />
<line x1="172.5" y1="311.7" x2="196" y2="311.7" stroke="#1db81d" stroke-width="0.7" />
<line x1="182.3" y1="173.3" x2="196" y2="173.3" stroke="#1db81d" stroke-width="0.7" />
<line x1="182.3" y1="191.3" x2="196" y2="191.3" stroke="#1db81d" stroke-width="0.7" />
<line x1="182.3" y1="204.2" x2="196" y2="204.2" stroke="#1db81d" stroke-width="0.7" />
<line x1="182.3" y1="216.7" x2="196" y2="216.7" stroke="#1db81d" stroke-width="0.7" />
<line x1="182.3" y1="234.5" x2="196" y2="234.5" stroke="#1db81d" stroke-width="0.7" />
<line x1="182.3" y1="287" x2="196" y2="287" stroke="#1db81d" stroke-width="0.7" />
<line x1="504.2" y1="148.3" x2="504.2" y2="311.7" stroke="#1db81d" stroke-width="0.7" />
<line x1="513.7" y1="148.3" x2="513.7" y2="311.7" stroke="#1db81d" stroke-width="0.7" />
<line x1="492.5" y1="148.3" x2="516.7" y2="148.3" stroke="#1db81d" stroke-width="0.7" />
<line x1="492.5" y1="311.7" x2="516.7" y2="311.7" stroke="#1db81d" stroke-width="0.7" />
<line x1="492.5" y1="173.3" x2="507" y2="173.3" stroke="#1db81d" stroke-width="0.7" />
<line x1="492.5" y1="191.3" x2="507" y2="191.3" stroke="#1db81d" stroke-width="0.7" />
<line x1="492.5" y1="204.2" x2="507" y2="204.2" stroke="#1db81d" stroke-width="0.7" />
<line x1="492.5" y1="216.7" x2="507" y2="216.7" stroke="#1db81d" stroke-width="0.7" />
<line x1="492.5" y1="234.5" x2="507" y2="234.5" stroke="#1db81d" stroke-width="0.7" />
<line x1="492.5" y1="287" x2="507" y2="287" stroke="#1db81d" stroke-width="0.7" />
<circle cx="203" cy="119" r="0.75" fill="#36dc36"/>
<circle cx="482.3" cy="119" r="0.75" fill="#36dc36"/>
<circle cx="203" cy="128.2" r="0.75" fill="#36dc36"/>
<circle cx="482.3" cy="128.2" r="0.75" fill="#36dc36"/>
<circle cx="203" cy="333.8" r="0.75" fill="#36dc36"/>
<circle cx="482.3" cy="333.8" r="0.75" fill="#36dc36"/>
<circle cx="203" cy="343" r="0.75" fill="#36dc36"/>
<circle cx="482.3" cy="343" r="0.75" fill="#36dc36"/>
<circle cx="234.7" cy="128.2" r="0.75" fill="#36dc36"/>
<circle cx="300.8" cy="128.2" r="0.75" fill="#36dc36"/>
<circle cx="327.2" cy="128.2" r="0.75" fill="#36dc36"/>
<circle cx="332.9" cy="128.2" r="0.75" fill="#36dc36"/>
<circle cx="351.7" cy="128.2" r="0.75" fill="#36dc36"/>
<circle cx="357.6" cy="128.2" r="0.75" fill="#36dc36"/>
<circle cx="383.3" cy="128.2" r="0.75" fill="#36dc36"/>
<circle cx="450.4" cy="128.2" r="0.75" fill="#36dc36"/>
<circle cx="245" cy="333.8" r="0.75" fill="#36dc36"/>
<circle cx="300.8" cy="333.8" r="0.75" fill="#36dc36"/>
<circle cx="327.2" cy="333.8" r="0.75" fill="#36dc36"/>
<circle cx="357.6" cy="333.8" r="0.75" fill="#36dc36"/>
<circle cx="384" cy="333.8" r="0.75" fill="#36dc36"/>
<circle cx="440" cy="333.8" r="0.75" fill="#36dc36"/>
<circle cx="184.7" cy="148.3" r="0.75" fill="#36dc36"/>
<circle cx="504.2" cy="148.3" r="0.75" fill="#36dc36"/>
<circle cx="184.7" cy="173.3" r="0.75" fill="#36dc36"/>
<circle cx="504.2" cy="173.3" r="0.75" fill="#36dc36"/>
<circle cx="184.7" cy="191.3" r="0.75" fill="#36dc36"/>
<circle cx="504.2" cy="191.3" r="0.75" fill="#36dc36"/>
<circle cx="184.7" cy="204.2" r="0.75" fill="#36dc36"/>
<circle cx="504.2" cy="204.2" r="0.75" fill="#36dc36"/>
<circle cx="184.7" cy="216.7" r="0.75" fill="#36dc36"/>
<circle cx="504.2" cy="216.7" r="0.75" fill="#36dc36"/>
<circle cx="184.7" cy="234.5" r="0.75" fill="#36dc36"/>
<circle cx="504.2" cy="234.5" r="0.75" fill="#36dc36"/>
<circle cx="184.7" cy="287" r="0.75" fill="#36dc36"/>
<circle cx="504.2" cy="287" r="0.75" fill="#36dc36"/>
<circle cx="184.7" cy="311.7" r="0.75" fill="#36dc36"/>
<circle cx="504.2" cy="311.7" r="0.75" fill="#36dc36"/>
<circle cx="175.3" cy="148.3" r="0.75" fill="#36dc36"/>
<circle cx="175.3" cy="311.7" r="0.75" fill="#36dc36"/>
<circle cx="513.7" cy="148.3" r="0.75" fill="#36dc36"/>
<circle cx="513.7" cy="311.7" r="0.75" fill="#36dc36"/>
<text x="218.5" y="127.1" font-size="5.2" fill="#e4e4e4" textLength="9.6" lengthAdjust="spacingAndGlyphs" text-anchor="middle">2700</text>
<text x="267.8" y="127.1" font-size="5.2" fill="#e4e4e4" textLength="9.6" lengthAdjust="spacingAndGlyphs" text-anchor="middle">5700</text>
<text x="314.2" y="127.1" font-size="5.2" fill="#e4e4e4" textLength="9.2" lengthAdjust="spacingAndGlyphs" text-anchor="middle">2200</text>
<text x="330" y="127.1" font-size="5.2" fill="#e4e4e4" textLength="6.6" lengthAdjust="spacingAndGlyphs" text-anchor="middle">500</text>
<text x="342.5" y="127.1" font-size="5.2" fill="#e4e4e4" textLength="9" lengthAdjust="spacingAndGlyphs" text-anchor="middle">1600</text>
<text x="354.6" y="127.1" font-size="5.2" fill="#e4e4e4" textLength="6.6" lengthAdjust="spacingAndGlyphs" text-anchor="middle">500</text>
<text x="370.4" y="127.1" font-size="5.2" fill="#e4e4e4" textLength="9.2" lengthAdjust="spacingAndGlyphs" text-anchor="middle">2200</text>
<text x="416.9" y="127.1" font-size="5.2" fill="#e4e4e4" textLength="9.6" lengthAdjust="spacingAndGlyphs" text-anchor="middle">5700</text>
<text x="466.2" y="127.1" font-size="5.2" fill="#e4e4e4" textLength="9.2" lengthAdjust="spacingAndGlyphs" text-anchor="middle">2700</text>
<text x="342.7" y="117.4" font-size="5.2" fill="#e4e4e4" textLength="11.3" lengthAdjust="spacingAndGlyphs" text-anchor="middle">23800</text>
<text x="224.3" y="332.1" font-size="5.2" fill="#e4e4e4" textLength="8.8" lengthAdjust="spacingAndGlyphs" text-anchor="middle">3600</text>
<text x="273.2" y="332.1" font-size="5.2" fill="#e4e4e4" textLength="9.6" lengthAdjust="spacingAndGlyphs" text-anchor="middle">4800</text>
<text x="314.2" y="332.1" font-size="5.2" fill="#e4e4e4" textLength="9" lengthAdjust="spacingAndGlyphs" text-anchor="middle">2200</text>
<text x="342.3" y="332.1" font-size="5.2" fill="#e4e4e4" textLength="9.4" lengthAdjust="spacingAndGlyphs" text-anchor="middle">2600</text>
<text x="370.6" y="332.1" font-size="5.2" fill="#e4e4e4" textLength="9" lengthAdjust="spacingAndGlyphs" text-anchor="middle">2200</text>
<text x="412" y="332.1" font-size="5.2" fill="#e4e4e4" textLength="9.6" lengthAdjust="spacingAndGlyphs" text-anchor="middle">4800</text>
<text x="461" y="332.1" font-size="5.2" fill="#e4e4e4" textLength="9" lengthAdjust="spacingAndGlyphs" text-anchor="middle">3600</text>
<text x="342.2" y="341.6" font-size="5.2" fill="#e4e4e4" textLength="11.6" lengthAdjust="spacingAndGlyphs" text-anchor="middle">23800</text>
<text x="183.3" y="160.8" font-size="5.2" fill="#e4e4e4" textLength="9.6" lengthAdjust="spacingAndGlyphs" text-anchor="middle" transform="rotate(-90 183.3 160.8)">2100</text>
<text x="502.8" y="160.8" font-size="5.2" fill="#e4e4e4" textLength="9.6" lengthAdjust="spacingAndGlyphs" text-anchor="middle" transform="rotate(-90 502.8 160.8)">2100</text>
<text x="183.3" y="182.3" font-size="5.2" fill="#e4e4e4" textLength="9" lengthAdjust="spacingAndGlyphs" text-anchor="middle" transform="rotate(-90 183.3 182.3)">1500</text>
<text x="502.8" y="182.3" font-size="5.2" fill="#e4e4e4" textLength="9" lengthAdjust="spacingAndGlyphs" text-anchor="middle" transform="rotate(-90 502.8 182.3)">1500</text>
<text x="183.3" y="197.8" font-size="5.2" fill="#e4e4e4" textLength="8.4" lengthAdjust="spacingAndGlyphs" text-anchor="middle" transform="rotate(-90 183.3 197.8)">1100</text>
<text x="502.8" y="197.8" font-size="5.2" fill="#e4e4e4" textLength="8.4" lengthAdjust="spacingAndGlyphs" text-anchor="middle" transform="rotate(-90 502.8 197.8)">1100</text>
<text x="183.3" y="210.5" font-size="5.2" fill="#e4e4e4" textLength="8.4" lengthAdjust="spacingAndGlyphs" text-anchor="middle" transform="rotate(-90 183.3 210.5)">1100</text>
<text x="502.8" y="210.5" font-size="5.2" fill="#e4e4e4" textLength="8.4" lengthAdjust="spacingAndGlyphs" text-anchor="middle" transform="rotate(-90 502.8 210.5)">1100</text>
<text x="183.3" y="225.6" font-size="5.2" fill="#e4e4e4" textLength="9" lengthAdjust="spacingAndGlyphs" text-anchor="middle" transform="rotate(-90 183.3 225.6)">1500</text>
<text x="502.8" y="225.6" font-size="5.2" fill="#e4e4e4" textLength="9" lengthAdjust="spacingAndGlyphs" text-anchor="middle" transform="rotate(-90 502.8 225.6)">1500</text>
<text x="183.3" y="260.6" font-size="5.2" fill="#e4e4e4" textLength="9.4" lengthAdjust="spacingAndGlyphs" text-anchor="middle" transform="rotate(-90 183.3 260.6)">4300</text>
<text x="502.8" y="260.6" font-size="5.2" fill="#e4e4e4" textLength="9.4" lengthAdjust="spacingAndGlyphs" text-anchor="middle" transform="rotate(-90 502.8 260.6)">4300</text>
<text x="183.3" y="299.4" font-size="5.2" fill="#e4e4e4" textLength="9.4" lengthAdjust="spacingAndGlyphs" text-anchor="middle" transform="rotate(-90 183.3 299.4)">2100</text>
<text x="502.8" y="299.4" font-size="5.2" fill="#e4e4e4" textLength="9.4" lengthAdjust="spacingAndGlyphs" text-anchor="middle" transform="rotate(-90 502.8 299.4)">2100</text>
<text x="173.9" y="229.9" font-size="5.2" fill="#e4e4e4" textLength="11.6" lengthAdjust="spacingAndGlyphs" text-anchor="middle" transform="rotate(-90 173.9 229.9)">17900</text>
<text x="512.2" y="229.9" font-size="5.2" fill="#e4e4e4" textLength="11.6" lengthAdjust="spacingAndGlyphs" text-anchor="middle" transform="rotate(-90 512.2 229.9)">17900</text>
<text x="273.2" y="163" font-size="4.8" font-weight="900" fill="#ff4a12" text-anchor="middle" textLength="7.6" lengthAdjust="spacingAndGlyphs" font-family="Noto Sans CJK SC,sans-serif">阳台</text>
<text x="412.09999999999997" y="163" font-size="4.8" font-weight="900" fill="#ff4a12" text-anchor="middle" textLength="7.6" lengthAdjust="spacingAndGlyphs" font-family="Noto Sans CJK SC,sans-serif">阳台</text>
<text x="313.8" y="171.8" font-size="4.8" font-weight="900" fill="#ff4a12" text-anchor="middle" textLength="7.6" lengthAdjust="spacingAndGlyphs" font-family="Noto Sans CJK SC,sans-serif">厨房</text>
<text x="371.49999999999994" y="171.8" font-size="4.8" font-weight="900" fill="#ff4a12" text-anchor="middle" textLength="7.6" lengthAdjust="spacingAndGlyphs" font-family="Noto Sans CJK SC,sans-serif">厨房</text>
<text x="274.6" y="196.7" font-size="4.8" font-weight="900" fill="#ff4a12" text-anchor="middle" textLength="7.6" lengthAdjust="spacingAndGlyphs" font-family="Noto Sans CJK SC,sans-serif">餐厅</text>
<text x="410.69999999999993" y="196.7" font-size="4.8" font-weight="900" fill="#ff4a12" text-anchor="middle" textLength="7.6" lengthAdjust="spacingAndGlyphs" font-family="Noto Sans CJK SC,sans-serif">餐厅</text>
<text x="313.8" y="229.3" font-size="4.8" font-weight="900" fill="#ff4a12" text-anchor="middle" textLength="7.6" lengthAdjust="spacingAndGlyphs" font-family="Noto Sans CJK SC,sans-serif">玄关</text>
<text x="371.49999999999994" y="229.3" font-size="4.8" font-weight="900" fill="#ff4a12" text-anchor="middle" textLength="7.6" lengthAdjust="spacingAndGlyphs" font-family="Noto Sans CJK SC,sans-serif">玄关</text>
<text x="230" y="268.4" font-size="4.8" font-weight="900" fill="#ff4a12" text-anchor="middle" textLength="7.6" lengthAdjust="spacingAndGlyphs" font-family="Noto Sans CJK SC,sans-serif">卧室</text>
<text x="455.29999999999995" y="268.4" font-size="4.8" font-weight="900" fill="#ff4a12" text-anchor="middle" textLength="7.6" lengthAdjust="spacingAndGlyphs" font-family="Noto Sans CJK SC,sans-serif">卧室</text>
<text x="270.8" y="264.2" font-size="4.8" font-weight="900" fill="#ff4a12" text-anchor="middle" textLength="7.6" lengthAdjust="spacingAndGlyphs" font-family="Noto Sans CJK SC,sans-serif">客厅</text>
<text x="414.49999999999994" y="264.2" font-size="4.8" font-weight="900" fill="#ff4a12" text-anchor="middle" textLength="7.6" lengthAdjust="spacingAndGlyphs" font-family="Noto Sans CJK SC,sans-serif">客厅</text>
<text x="282.7" y="302.6" font-size="4.8" font-weight="900" fill="#ff4a12" text-anchor="middle" textLength="7.6" lengthAdjust="spacingAndGlyphs" font-family="Noto Sans CJK SC,sans-serif">阳台</text>
<text x="402.59999999999997" y="302.6" font-size="4.8" font-weight="900" fill="#ff4a12" text-anchor="middle" textLength="7.6" lengthAdjust="spacingAndGlyphs" font-family="Noto Sans CJK SC,sans-serif">阳台</text>
</svg>
<div id="tabs" class="abs"></div>
<div id="status" class="abs"></div>
<svg class="abs" style="left:0;top:396px" width="600" height="30" viewBox="0 396 600 30"><rect x="0" y="410" width="600" height="0.9" fill="#5aa985"/>
<rect x="88.6" y="402" width="8.4" height="7.4" stroke="#9a9a9a" stroke-width="0.5" fill="#ececec" />
<rect x="97.35" y="402" width="8.4" height="7.4" stroke="#9a9a9a" stroke-width="0.5" fill="#ececec" />
<rect x="106.1" y="402" width="8.4" height="7.4" stroke="#9a9a9a" stroke-width="0.5" fill="#ececec" />
<rect x="114.85" y="402" width="8.4" height="7.4" stroke="#9a9a9a" stroke-width="0.5" fill="#ececec" />
<path d="M91.2,403.8 L91.2,407.6" stroke="#444" stroke-width="0.7" fill="none" /><path d="M94.8,403.6 L92,405.7 L94.8,407.8 Z" stroke="#444" stroke-width="0.2" fill="#444" />
<path d="M103,403.6 L100,405.7 L103,407.8 Z" stroke="#444" stroke-width="0.2" fill="#444" />
<path d="M108.8,403.6 L111.8,405.7 L108.8,407.8 Z" stroke="#444" stroke-width="0.2" fill="#444" />
<path d="M117,403.6 L119.8,405.7 L117,407.8 Z" stroke="#444" stroke-width="0.2" fill="#444" /><path d="M120.6,403.8 L120.6,407.6" stroke="#444" stroke-width="0.7" fill="none" />
<path d="M199.2,401.4 L242,401.4 L236.2,409.7 L204.6,409.7 Z" stroke="#5a5a5a" stroke-width="0.5" fill="#cfcfcf" />
<path d="M161,401.4 L203.4,401.4 L197.6,409.7 L166.4,409.7 Z" stroke="#5a5a5a" stroke-width="0.5" fill="#cfcfcf" />
<path d="M124.4,401.2 L166,401.2 L158.6,409.9 L129.2,409.9 Z" stroke="#5a5a5a" stroke-width="0.5" fill="#fbfbfb" />
<text x="136" y="408.4" font-size="7.2" fill="#111" font-family="Liberation Sans,Noto Sans CJK SC,sans-serif">模型</text>
<text x="168.8" y="408.2" font-size="7.2" fill="#111" font-family="Liberation Sans,Noto Sans CJK SC,sans-serif">Layout1</text>
<text x="207.4" y="408.2" font-size="7.2" fill="#111" font-family="Liberation Sans,Noto Sans CJK SC,sans-serif">Layout2</text>
<rect x="7" y="412.2" width="5.6" height="5.2" stroke="none" stroke-width="0" fill="#e8a01c" /><rect x="12.6" y="412.2" width="5.4" height="5.2" stroke="none" stroke-width="0" fill="#f0c83a" /><rect x="7" y="417.4" width="5.6" height="5.2" stroke="none" stroke-width="0" fill="#d83a28" /><rect x="12.6" y="417.4" width="5.4" height="5.2" stroke="none" stroke-width="0" fill="#58a838" />
<path d="M9.4,416.6 L11.8,420 L16.2,413.4" stroke="#fff" stroke-width="1.2" fill="none" />
<text x="21.2" y="421" font-size="7" font-weight="350" fill="#4a4a4a" font-family="Liberation Sans,Noto Sans CJK SC,sans-serif">CAD智能弱电</text>
<rect x="69.6" y="412.5" width="50" height="10.6" stroke="#b0b0b0" stroke-width="0.7" fill="#ececec" rx="0.8"/>
<path d="M76.6,414 L74,418 L75.8,418 L74.6,421.6 L78,417 L76.2,417 Z" stroke="#333" stroke-width="0.2" fill="#333" />
<text x="80.2" y="420.6" font-size="7.3" font-weight="350" fill="#222" font-family="Liberation Sans,Noto Sans CJK SC,sans-serif">快捷命令表</text>
<rect x="124.8" y="412.6" width="146.4" height="10.9" stroke="#9c9c9c" stroke-width="0.8" fill="#efefef" />
<text x="126.6" y="420.6" font-size="7.4" fill="#8a8a8a" font-family="Liberation Sans,Noto Sans CJK SC,sans-serif">输入快捷命令</text>
<rect x="271.2" y="412.6" width="41.4" height="10.9" stroke="#a8a8a8" stroke-width="0.6" fill="#d3d3d3" />
<text x="285.4" y="420.6" font-size="7.4" fill="#222" font-family="Liberation Sans,Noto Sans CJK SC,sans-serif">确定</text>
<rect x="430.4" y="412.8" width="82.4" height="10.7" stroke="#909090" stroke-width="0.8" fill="#ebebeb" />
<rect x="499" y="412.8" width="13.8" height="10.7" stroke="#909090" stroke-width="0.8" fill="#eeeeee" />
<text x="432.4" y="420.6" font-size="7.4" fill="#828282" font-family="Liberation Sans,Noto Sans CJK SC,sans-serif">搜索文字</text>
<circle cx="505.6" cy="417.4" r="2.2" stroke="#555" stroke-width="0.8" fill="none"/><path d="M507.2,419 L509.2,421" stroke="#555" stroke-width="1.0" fill="none" />
<rect x="517.6" y="412.4" width="12" height="11.2" stroke="#bdbdbd" stroke-width="0.6" fill="#f4f4f4" rx="1"/><path d="M520.6,414.6 L520.6,421 L527,421" stroke="#4a4a4a" stroke-width="0.9" fill="none" /><path d="M522.6,418 L522.6,419.6 L524.4,419.6" stroke="#777" stroke-width="0.5" fill="none" />
<rect x="533.6" y="412.4" width="13" height="11.2" stroke="#e0b84a" stroke-width="0.7" fill="#fbe6a6" rx="1"/><rect x="537.4" y="414.6" width="5.6" height="5.2" stroke="#4a4a4a" stroke-width="0.8" fill="#ddd" /><path d="M536.4,421.4 L544,421.4" stroke="#4a4a4a" stroke-width="0.8" fill="none" /><path d="M538,415.2 L542.4,419.2" stroke="#666" stroke-width="0.5" fill="none" />
<rect x="549.8" y="412.4" width="13.4" height="11.2" stroke="#e0b84a" stroke-width="0.7" fill="#fbe6a6" rx="1"/><path d="M552.6,418 L560.4,418 M556.5,414.4 L556.5,421.6" stroke="#222" stroke-width="1.2" fill="none" />
<rect x="565.8" y="412.4" width="12" height="11.2" stroke="#bdbdbd" stroke-width="0.6" fill="#f4f4f4" rx="1"/>
<circle cx="571.8" cy="418" r="4" fill="#e8e8e8" stroke="#777" stroke-width="0.5"/>
<path d="M571.8,418 L567.8,418 A4,4 0 0 1 573.8,414.54 Z" fill="#e24a3a"/><path d="M571.8,418 L573.8,414.54 A4,4 0 0 1 573.8,421.46 Z" fill="#3a7ad8"/><path d="M571.8,418 L573.8,421.46 A4,4 0 0 1 567.8,418 Z" fill="#e8c830"/><circle cx="571.8" cy="418" r="1.4" fill="#58b848"/>
<rect x="580.8" y="412.4" width="13.4" height="11.2" stroke="#bdbdbd" stroke-width="0.6" fill="#f4f4f4" rx="1"/>
<circle cx="587.5" cy="418" r="2.9" stroke="#4a4a4a" stroke-width="0.8" fill="none"/><ellipse cx="587.5" cy="418" rx="5" ry="1.8" fill="none" stroke="#4a4a4a" stroke-width="0.7" transform="rotate(-25 587.5 418)"/></svg>
<div class="abs" style="left:598.7px;top:0;width:1.3px;height:426px;background:#5e6463"></div>
<div class="abs" style="left:0;top:0;width:1.2px;height:426px;background:#66716f"></div>
</body>
</html>
